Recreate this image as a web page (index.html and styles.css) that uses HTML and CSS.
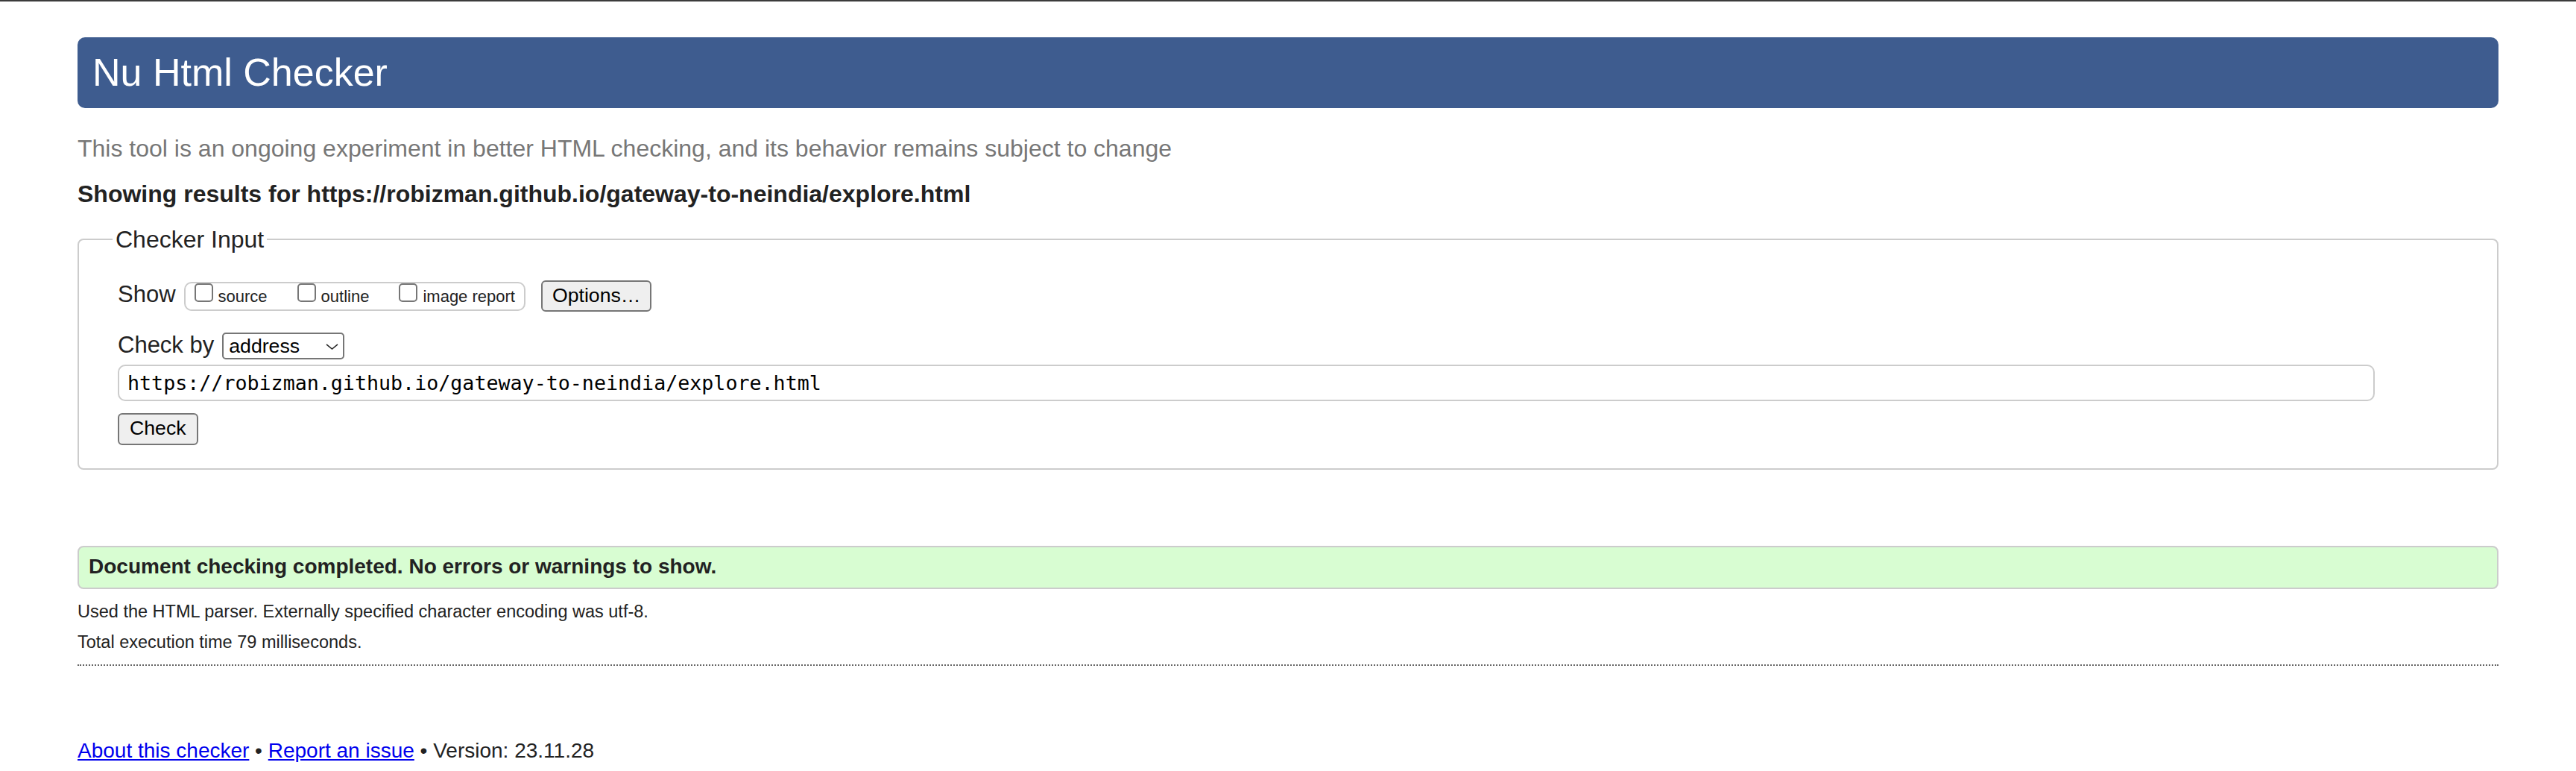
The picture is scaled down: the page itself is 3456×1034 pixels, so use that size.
FILE: index.html
```html
<!DOCTYPE html>
<html lang="en">
<head>
<meta charset="utf-8">
<title>Nu Html Checker</title>
<link rel="stylesheet" href="styles.css">
</head>
<body>
<h1 class="title">Nu Html Checker</h1>
<p class="intro">This tool is an ongoing experiment in better HTML checking, and its behavior remains subject to change</p>
<p class="showing">Showing results for https://robizman.github.io/gateway-to-neindia/explore.html</p>
<form class="checker">
<fieldset class="input-set">
<legend class="legend">Checker Input</legend>
<div class="row">
<span class="label">Show</span>
<span class="show-group"><label class="opt"><input type="checkbox" class="cb">source</label><label class="opt"><input type="checkbox" class="cb">outline</label><label class="opt"><input type="checkbox" class="cb">image report</label></span>
<button type="button" class="btn options">Options…</button>
</div>
<div class="row by-row">
<span class="label">Check by</span>
<span class="select-wrap"><select class="select"><option>address</option></select><svg class="chev" viewBox="0 0 17 8" width="17" height="8"><path d="M1 0.8 L8.5 7 L16 0.8" fill="none" stroke="#222" stroke-width="1.5"/></svg></span>
</div>
<input class="url" type="url" value="https://robizman.github.io/gateway-to-neindia/explore.html">
<button type="button" class="btn check">Check</button>
</fieldset>
</form>
<p class="success">Document checking completed. No errors or warnings to show.</p>
<p class="meta">Used the HTML parser. Externally specified character encoding was utf-8.</p>
<p class="meta meta-next">Total execution time 79 milliseconds.</p>
<hr class="dots">
<p class="footer"><a class="link" href="#">About this checker</a> • <a class="link" href="#">Report an issue</a> • Version: 23.11.28</p>
</body>
</html>
```
FILE: styles.css
```css
* { box-sizing: border-box; }
html { background: #fff; }
body {
  margin: 0;
  padding: 0 104px;
  border-top: 2px solid #3b3b3b;
  font-family: "Liberation Sans", Arial, sans-serif;
  color: #222;
  background: #fff;
}
.title {
  margin: 48px 0 0;
  padding: 16px 20px;
  height: 95px;
  background: #3e5c8f;
  color: #fff;
  font-size: 52px;
  font-weight: normal;
  line-height: 63px;
  border-radius: 10px;
}
.intro {
  margin: 34px 0 0;
  font-size: 32px;
  line-height: 40px;
  color: #777;
}
.showing {
  margin: 21px 0 0;
  font-size: 32px;
  line-height: 40px;
  font-weight: bold;
}
.checker { margin: 21px 0 0; }
.input-set {
  margin: 0;
  padding: 34px 52px 31px;
  border: 2px solid #ccc;
  border-radius: 8px;
  min-width: 0;
}
.legend {
  font-size: 32px;
  line-height: 40px;
  padding: 0 4px;
  margin-left: -7px;
  color: #222;
}
.row {
  display: flex;
  align-items: baseline;
}
.by-row { margin-top: 25px; }
.label {
  font-size: 31px;
  line-height: 40px;
  margin-right: 11px;
}
.show-group {
  display: inline-flex;
  align-items: baseline;
  gap: 40px;
  padding: 0 12px;
  border: 2px solid #ccc;
  border-radius: 10px;
  font-size: 22px;
  line-height: 34px;
}
.opt { display: inline-block; white-space: nowrap; }
.cb {
  -webkit-appearance: none;
  appearance: none;
  display: inline-block;
  width: 25px;
  height: 25px;
  margin: 0 7px 0 0;
  border: 2px solid #767676;
  border-radius: 5px;
  background: #fff;
  vertical-align: baseline;
}
.btn {
  font-family: "Liberation Sans", Arial, sans-serif;
  font-size: 26.67px;
  line-height: 30px;
  color: #000;
  background: #efefef;
  border: 2px solid #767676;
  border-radius: 6px;
  padding: 3px 13px 5px;
  height: 42px;
}
.options { margin-left: 21px; }
.check {
  display: block;
  margin-top: 16px;
  height: 43px;
  padding: 3px 14px 6px;
}
.select-wrap {
  position: relative;
  display: inline-block;
}
.select {
  -webkit-appearance: none;
  appearance: none;
  width: 164px;
  height: 36px;
  border: 2px solid #767676;
  border-radius: 5px;
  background: #fff;
  font-family: "Liberation Sans", Arial, sans-serif;
  font-size: 26.67px;
  color: #000;
  padding: 0 0 0 7px;
}
.chev {
  position: absolute;
  right: 8px;
  top: 15px;
  pointer-events: none;
}
.url {
  display: block;
  width: 3028px;
  height: 49px;
  margin-top: 6px;
  padding: 0 11px;
  border: 2px solid #ccc;
  border-radius: 10px;
  font-family: "DejaVu Sans Mono", "Liberation Mono", monospace;
  font-size: 26.67px;
  color: #000;
  background: #fff;
}
.success {
  margin: 102px 0 0;
  padding: 9px 13px 11px;
  border: 2px solid #ccc;
  border-radius: 8px;
  background: #d8fdd2;
  font-size: 28px;
  line-height: 34px;
  font-weight: bold;
}
.meta {
  margin: 15px 0 0;
  font-size: 23.5px;
  line-height: 30px;
}
.meta-next { margin-top: 11px; }
.dots {
  margin: 15px 0 0;
  border: 0;
  border-top: 2px dotted #666;
  height: 0;
}
.footer {
  margin: 97px 0 0;
  font-size: 28px;
  line-height: 34px;
}
.link { color: #00e; }
```
